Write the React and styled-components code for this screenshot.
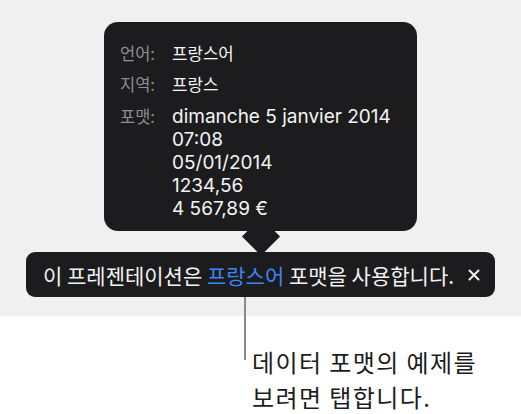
import React from "react";
import styled, { createGlobalStyle } from "styled-components";

const Global = createGlobalStyle`
  html, body { margin: 0; padding: 0; background: #ffffff; }
  body { font-family: Inter, "Noto Sans CJK KR", sans-serif; }
`;

const Page = styled.div`
  width: 521px;
  height: 414px;
  background: linear-gradient(#f0f0f0 0, #f0f0f0 316px, #ffffff 316px);
  display: flex;
  flex-direction: column;
  align-items: center;
  padding-top: 22px;
  box-sizing: border-box;
  overflow: hidden;
`;

const Popover = styled.div`
  position: relative;
  width: 313px;
  height: 209px;
  box-sizing: border-box;
  background: #1c1c1e;
  border-radius: 14px;
  padding: 20px 16px 0 16px;
  display: grid;
  grid-template-columns: 52px 1fr;
  grid-auto-rows: min-content;
  row-gap: 8px;
  font-family: Inter, "Noto Sans CJK KR", sans-serif;
  font-size: 19px;
  line-height: 23px;

  &::after {
    content: "";
    position: absolute;
    left: 50%;
    bottom: -19px;
    width: 27px;
    height: 27px;
    background: #1c1c1e;
    border-radius: 0 0 4px 0;
    transform: translateX(-50%) rotate(45deg);
  }
`;

const Label = styled.div`
  color: #8e8e93;
  font-family: "Noto Sans CJK KR", sans-serif;
  font-size: 16.5px;
  margin-top: ${(p) => (p.$extra ? "1px" : "0")};
`;

const Value = styled.div`
  color: #f4f4f4;
  font-size: ${(p) => (p.$korean ? "16.8px" : "19px")};
  font-family: ${(p) => (p.$korean ? '"Noto Sans CJK KR", sans-serif' : 'Inter, "Noto Sans CJK KR", sans-serif')};
  margin-top: ${(p) => (p.$extra ? "1px" : "0")};
  white-space: nowrap;
`;

const Banner = styled.div`
  margin-top: 21px;
  width: 469px;
  height: 45px;
  box-sizing: border-box;
  background: #1c1c1e;
  border-radius: 9px;
  display: flex;
  align-items: center;
  padding: 0 15px 0 17px;
  font-family: "Noto Sans CJK KR", sans-serif;
  font-size: 21px;
  color: #f2f2f2;
  white-space: nowrap;
`;

const BannerText = styled.span`
  flex: 1;
`;

const Link = styled.span`
  color: #3b87f5;
`;

const Close = styled.svg`
  width: 12px;
  height: 12px;
  flex: none;
`;

const Callout = styled.div`
  align-self: flex-start;
  margin-left: 244px;
  display: flex;
  align-items: flex-start;
`;

const Line = styled.div`
  width: 2px;
  height: 63px;
  background: #8a8a8a;
  flex: none;
`;

const CalloutText = styled.div`
  margin-top: 47px;
  margin-left: 6px;
  display: flex;
  flex-direction: column;
`;

const CalloutLine = styled.div`
  height: 35px;
  font-family: "Noto Sans CJK KR", sans-serif;
  font-size: 24px;
  letter-spacing: 1.4px;
  line-height: 35px;
  color: #1c1c1c;
  white-space: nowrap;
`;

export default function App() {
  return (
    <>
      <Global />
      <Page>
        <Popover>
          <Label>언어:</Label>
          <Value $korean>프랑스어</Value>
          <Label>지역:</Label>
          <Value $korean>프랑스</Value>
          <Label $extra>포맷:</Label>
          <Value $extra>
            dimanche 5 janvier 2014
            <br />
            07:08
            <br />
            05/01/2014
            <br />
            1234,56
            <br />
            4 567,89 €
          </Value>
        </Popover>
        <Banner>
          <BannerText>
            이 프레젠테이션은 <Link>프랑스어</Link> 포맷을 사용합니다.
          </BannerText>
          <Close viewBox="0 0 12 12">
            <path d="M1.5 1.5 L10.5 10.5 M10.5 1.5 L1.5 10.5" stroke="#f2f2f2" strokeWidth="2" strokeLinecap="round" />
          </Close>
        </Banner>
        <Callout>
          <Line />
          <CalloutText>
            <CalloutLine>데이터 포맷의 예제를</CalloutLine>
            <CalloutLine>보려면 탭합니다.</CalloutLine>
          </CalloutText>
        </Callout>
      </Page>
    </>
  );
}
